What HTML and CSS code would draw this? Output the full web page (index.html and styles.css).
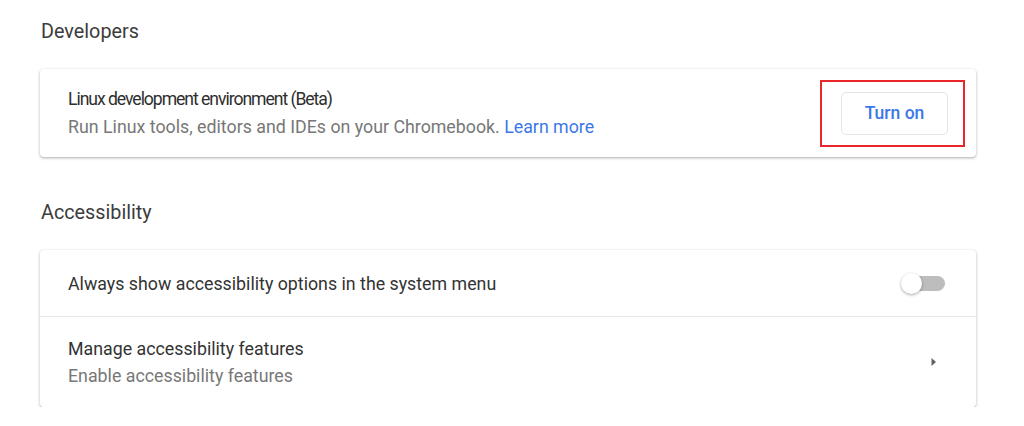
FILE: index.html
```html
<!DOCTYPE html>
<html lang="en">
<head>
<meta charset="utf-8">
<title>Settings</title>
<link rel="stylesheet" href="styles.css">
</head>
<body>
<main class="page">
  <section class="section">
    <h2 class="section-title">Developers</h2>
    <div class="card">
      <div class="row row-tall">
        <div class="row-text">
          <div class="primary primary-condensed">Linux development environment (Beta)</div>
          <div class="secondary">Run Linux tools, editors and IDEs on your Chromebook. <a class="link" href="#">Learn more</a></div>
        </div>
        <div class="highlight">
          <button class="btn" type="button">Turn on</button>
        </div>
      </div>
    </div>
  </section>
  <section class="section">
    <h2 class="section-title">Accessibility</h2>
    <div class="card">
      <div class="row row-single">
        <div class="row-text">
          <div class="primary">Always show accessibility options in the system menu</div>
        </div>
        <span class="toggle"><span class="knob"></span></span>
      </div>
      <div class="row row-double">
        <div class="row-text">
          <div class="primary">Manage accessibility features</div>
          <div class="secondary">Enable accessibility features</div>
        </div>
        <svg class="arrow" width="8" height="10" viewBox="0 0 8 10"><path d="M1.5 1 L6 5 L1.5 9 Z" fill="#5f6368"/></svg>
      </div>
    </div>
  </section>
</main>
</body>
</html>
```

FILE: styles.css
```css
* { box-sizing: border-box; }
html, body { margin: 0; background: #fff; }
body {
  font-family: Roboto, "Noto Sans", "Liberation Sans", sans-serif;
  color: #333;
}
.page {
  width: 936px;
  margin-left: 40px;
  padding-top: 20px;
}
.section + .section { margin-top: 44px; }
.section-title {
  margin: 0 0 25px 1px;
  font-size: 19.8px;
  line-height: 24px;
  font-weight: 400;
  color: #3c3c3c;
}
.card {
  background: #fff;
  border-radius: 4px;
  box-shadow: 0 1px 2px rgba(60,64,67,.28), 0 1px 3px 1px rgba(60,64,67,.12);
}
.row {
  display: flex;
  align-items: center;
  padding: 0 31px 0 28px;
}
.row-tall { height: 88px; padding-right: 11px; }
.row-single { height: 67px; border-bottom: 1px solid #e8e8e8; }
.row-double { height: 90px; }
.row-text { flex: 1; }
.primary {
  font-size: 17.8px;
  line-height: 27px;
  color: #333;
}
.primary-condensed {
  font-size: 17.6px;
  letter-spacing: -1.05px;
  color: #2e2e2e;
}
.secondary {
  font-size: 17.8px;
  line-height: 27px;
  color: #777;
}
.link { color: #3b78e7; text-decoration: none; }
.highlight {
  width: 145px;
  height: 67px;
  border: 2px solid #e8262b;
  display: flex;
  align-items: center;
  justify-content: flex-end;
  padding-right: 15px;
}
.btn {
  width: 107px;
  height: 43px;
  background: #fff;
  border: 1px solid #e3e5e8;
  border-radius: 5px;
  font-family: inherit;
  font-size: 17.5px;
  font-weight: 500;
  color: #3b78e7;
  padding: 0;
}
.toggle {
  position: relative;
  width: 42px;
  height: 15px;
  border-radius: 8px;
  background: #bdbdbd;
}
.knob {
  position: absolute;
  left: -2px;
  top: -3px;
  width: 21px;
  height: 21px;
  border-radius: 50%;
  background: #fff;
  box-shadow: 0 1px 3px rgba(0,0,0,.35);
}
.arrow { margin-right: 7px; }
```
